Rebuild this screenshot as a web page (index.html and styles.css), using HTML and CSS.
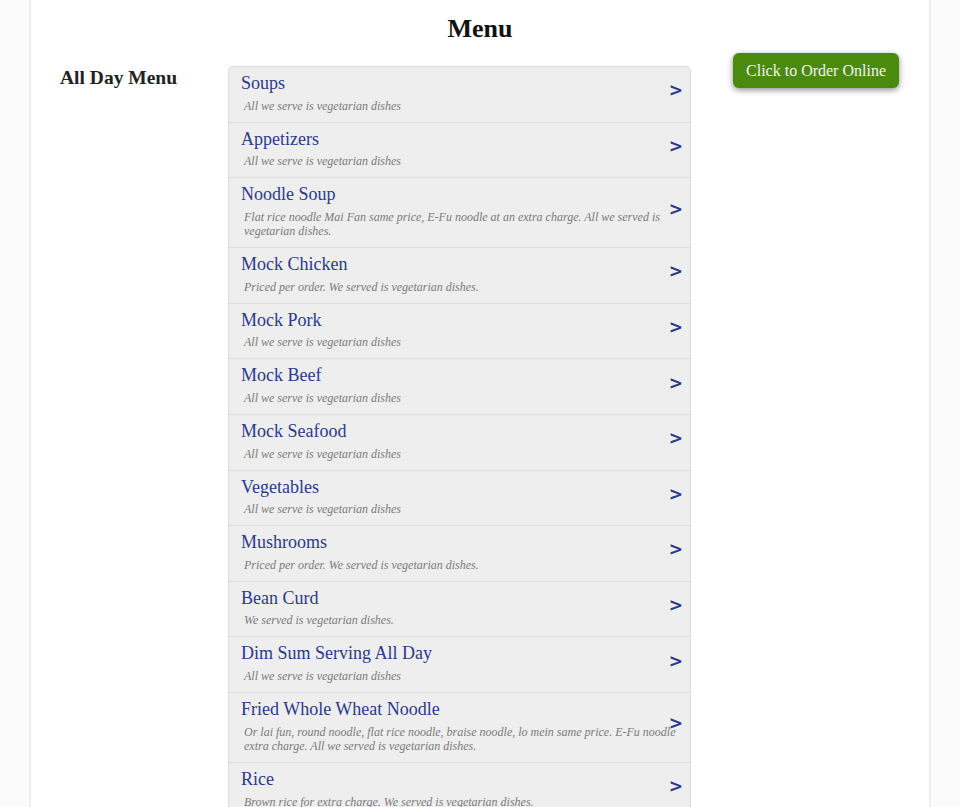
FILE: index.html
```html
<!DOCTYPE html>
<html lang="en">
<head>
<meta charset="utf-8">
<title>Menu</title>
<link rel="stylesheet" href="styles.css">
</head>
<body>
<div class="page">
  <h1 class="page-title">Menu</h1>
  <div class="layout">
    <h2 class="side-title">All Day Menu</h2>
    <ul class="menu-list">
      <li class="menu-item"><div class="item-name">Soups</div><div class="item-desc">All we serve is vegetarian dishes</div><span class="arrow">&gt;</span></li>
      <li class="menu-item"><div class="item-name">Appetizers</div><div class="item-desc">All we serve is vegetarian dishes</div><span class="arrow">&gt;</span></li>
      <li class="menu-item"><div class="item-name">Noodle Soup</div><div class="item-desc">Flat rice noodle Mai Fan same price, E-Fu noodle at an extra charge. All we served is vegetarian dishes.</div><span class="arrow">&gt;</span></li>
      <li class="menu-item"><div class="item-name">Mock Chicken</div><div class="item-desc">Priced per order. We served is vegetarian dishes.</div><span class="arrow">&gt;</span></li>
      <li class="menu-item"><div class="item-name">Mock Pork</div><div class="item-desc">All we serve is vegetarian dishes</div><span class="arrow">&gt;</span></li>
      <li class="menu-item"><div class="item-name">Mock Beef</div><div class="item-desc">All we serve is vegetarian dishes</div><span class="arrow">&gt;</span></li>
      <li class="menu-item"><div class="item-name">Mock Seafood</div><div class="item-desc">All we serve is vegetarian dishes</div><span class="arrow">&gt;</span></li>
      <li class="menu-item"><div class="item-name">Vegetables</div><div class="item-desc">All we serve is vegetarian dishes</div><span class="arrow">&gt;</span></li>
      <li class="menu-item"><div class="item-name">Mushrooms</div><div class="item-desc">Priced per order. We served is vegetarian dishes.</div><span class="arrow">&gt;</span></li>
      <li class="menu-item"><div class="item-name">Bean Curd</div><div class="item-desc">We served is vegetarian dishes.</div><span class="arrow">&gt;</span></li>
      <li class="menu-item"><div class="item-name">Dim Sum Serving All Day</div><div class="item-desc">All we serve is vegetarian dishes</div><span class="arrow">&gt;</span></li>
      <li class="menu-item"><div class="item-name">Fried Whole Wheat Noodle</div><div class="item-desc">Or lai fun, round noodle, flat rice noodle, braise noodle, lo mein same price. E-Fu noodle extra charge. All we served is vegetarian dishes.</div><span class="arrow">&gt;</span></li>
      <li class="menu-item"><div class="item-name">Rice</div><div class="item-desc">Brown rice for extra charge. We served is vegetarian dishes.</div><span class="arrow">&gt;</span></li>
    </ul>
    <div class="order-col">
      <a class="order-btn" href="#">Click to Order Online</a>
    </div>
  </div>
</div>
</body>
</html>
```

FILE: styles.css
```css
html, body {
  margin: 0;
  padding: 0;
}
body {
  background: #fbfbfb;
  font-family: "Liberation Serif", "Times New Roman", serif;
  color: #222;
}
.page {
  width: 898px;
  margin: 0 auto;
  background: #fff;
  border-left: 2px solid #efefef;
  border-right: 2px solid #efefef;
  min-height: 807px;
  padding-top: 13px;
}
.page-title {
  margin: 0 0 21px;
  font-size: 26px;
  line-height: 32px;
  font-weight: bold;
  text-align: center;
  color: #111;
}
.layout {
  display: grid;
  grid-template-columns: 168px 463px 1fr;
  padding-left: 29px;
  align-items: start;
}
.side-title {
  margin: 0;
  font-size: 19.5px;
  line-height: 24px;
  font-weight: bold;
  color: #222;
}
.menu-list {
  list-style: none;
  margin: 0;
  padding: 0;
  border: 1px solid #dcdcdc;
  border-bottom: none;
  border-radius: 5px 5px 0 0;
  background: #eeeeee;
}
.menu-item {
  position: relative;
  padding: 6px 12px 8.6px 12px;
  border-bottom: 1px solid #dcdcdc;
}
.item-name {
  font-size: 18px;
  line-height: 21.6px;
  color: #2b3a8c;
}
.item-desc {
  margin: 4px 0 0 3px;
  font-size: 12px;
  line-height: 14.4px;
  font-style: italic;
  color: #7a7a7a;
}
.arrow {
  position: absolute;
  right: 7px;
  top: calc(50% - 4px);
  transform: translateY(-50%);
  font-family: "DejaVu Sans", sans-serif;
  font-weight: bold;
  font-size: 17px;
  color: #2b3a8c;
}
.order-col {
  display: flex;
  justify-content: center;
  padding-left: 12px;
  margin-top: -13px;
}
.order-btn {
  display: inline-block;
  padding: 0 13px;
  height: 35px;
  line-height: 35px;
  font-size: 16px;
  color: #f2f2f2;
  background: #4a8a0c;
  border-radius: 6px;
  text-decoration: none;
  box-shadow: 0 2px 6px rgba(0, 0, 0, 0.45);
}
```
